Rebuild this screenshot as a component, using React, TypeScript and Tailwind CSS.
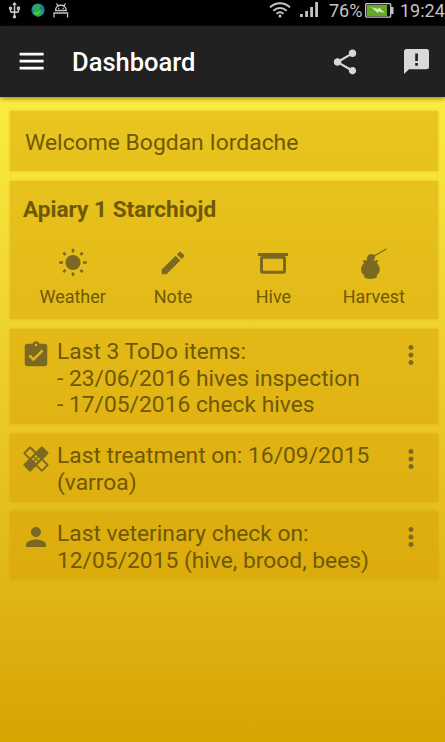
import type { ReactNode } from "react";
import {
  MdAssignmentTurnedIn,
  MdEdit,
  MdHealing,
  MdMoreVert,
  MdPerson,
  MdShare,
  MdUsb,
  MdWbSunny,
} from "react-icons/md";

function MenuIcon() {
  return (
    <svg className="-mt-[2px] ml-[19px] h-[18px] w-[25px]" viewBox="0 0 25 18" fill="currentColor">
      <path d="M.6 .7h24v2.700H.6zM.6 7.700h24v2.700H.6zM.6 14.700h24v2.700H.6z" />
    </svg>
  );
}

function FeedbackIcon() {
  return (
    <svg className="mr-[16px] ml-[44px] -mt-[1px] h-[25px] w-[25px] text-[#d8d8d8]" viewBox="0 0 25 25" fill="currentColor" fillRule="evenodd">
      <path d="M2.500 0h20A2.500 2.500 0 0 1 25 2.500v15.200a2.500 2.500 0 0 1-2.500 2.500H5L0 25V2.500A2.500 2.500 0 0 1 2.500 0zM11.200 4.500v7.600h2.700V4.500zM11.200 14v2.800h2.700V14z" />
    </svg>
  );
}

function HiveIcon() {
  return (
    <svg className="size-[30px]" viewBox="0 0 30 30" fill="none">
      <path d="M0 5h30v3H0z" fill="currentColor" />
      <rect x="3.500" y="9.300" width="23" height="15" rx="1.200" stroke="currentColor" strokeWidth="3" />
    </svg>
  );
}

function HoneyIcon() {
  return (
    <svg className="size-[30px] overflow-visible" viewBox="0 0 30 30" fill="currentColor">
      <path d="M27.200.2 27.800 1.200 15.500 8.600 14.700 7.400z" />
      <path d="M7.800 10.500c.2-2.800 2.500-4.700 5-4.400 3 .2 4.100 2.600 2.600 4.700l-1.200 2.200H7.800z" />
      <path d="M4.800 12c2 .8 11.500.8 13.600 0 .9.500.8 1.700-.2 2.200v1.500c3.700 3.200 3.400 8.800-.4 11.500v1.600c-.3 2.700-12.300 2.700-12.700 0v-1.600c-3.800-2.700-4.200-8.300-.4-11.500v-1.500c-.9-.6-.8-1.700.1-2.200z" />
    </svg>
  );
}

function StatusBar() {
  return (
    <div className="flex h-[26px] shrink-0 items-center bg-black text-[#c4c4c4]">
      <MdUsb className="ml-[5px] -mt-[6px] size-[19px]" />
      <svg className="-mt-[7px] ml-[7px] size-[14px]" viewBox="0 0 14 14">
        <circle cx="7" cy="7" r="6.600" fill="#1f7d9c" />
        <path d="M3 2 7 1l3 2-2 3 4 2-1 3-4 3-4-3 1-3-3-2z" fill="#26ac54" />
        <path d="m3 8 2 2 5-3-3 5-4-1z" fill="#55c936" />
      </svg>
      <svg className="-mt-[6px] ml-[8px] h-[15px] w-[16px]" viewBox="0 0 16 15" fill="none" stroke="currentColor" strokeWidth="1.300">
        <path d="M2.500 7.500c0-7 10.800-7 10.800 0zM3.400.5 5 2.800M12.500.5 11 2.800M1 14.500V10h13.600v4.500" />
        <path d="M5 5.300h1.300M9.600 5.300h1.300" />
      </svg>
      <svg className="-mt-[6px] ml-[200px] h-[16px] w-[22px]" viewBox="0 0 22 16" fill="none" stroke="currentColor" strokeWidth="1.900">
        <path d="M1 5.300c5.800-5.400 14.200-5.400 20 0M4.300 8.700c4-3.600 9.400-3.600 13.400 0M7.500 11.800c2.200-1.900 4.800-1.900 7 0" />
        <circle cx="11" cy="14" r="1.500" fill="currentColor" stroke="none" />
      </svg>
      <svg className="-mt-[8px] ml-[8px] h-[16px] w-[20px]" viewBox="0 0 20 16" fill="currentColor">
        <path d="M1 13h2.800v3H1zM6.200 10H9v6H6.200zM11.200 6H14v10h-2.800zM16.200 1H19v15h-2.800z" />
      </svg>
      <span className="-mt-[5px] ml-[10px] w-[33px] whitespace-nowrap text-[18px] leading-none">76%</span>
      <svg className="-mt-[6px] ml-[3px] h-[15px] w-[29px]" viewBox="0 0 29 15">
        <rect x=".7" y=".7" width="25" height="13.500" rx="1" fill="#111" stroke="#c4c4c4" strokeWidth="1.300" />
        <path d="M2 2h20v11H2z" fill="#62ab22" />
        <path d="M26 4h2.500v7H26z" fill="#c4c4c4" />
        <path d="m6 4 7 2 1-1.500 6 5.500-6-1.500-1.200 1.500z" fill="#d6e5c7" />
      </svg>
      <span className="-mt-[5px] ml-[6px] whitespace-nowrap text-[18px] leading-none">19:24</span>
    </div>
  );
}

function Card({ className, children }: { className: string; children: ReactNode }) {
  return (
    <section className={`bg-[#d7a000]/50 shadow-[0_0_3px_rgba(215,160,0,0.5)] ${className}`}>
      {children}
    </section>
  );
}

function Action({ icon, label }: { icon: ReactNode; label: string }) {
  return (
    <button className="flex flex-col items-center text-[18px] leading-[21px]">
      <span className="text-[#7a6823]">{icon}</span>
      <span className="mt-[8px]">{label}</span>
    </button>
  );
}

function InfoCard({ className, icon, lines }: { className: string; icon: ReactNode; lines: string[] }) {
  return (
    <Card className={`flex items-start pl-[11px] ${className}`}>
      <span className="mt-[1px] text-[#7a6823]">{icon}</span>
      <div className="ml-[6px] flex-1 whitespace-nowrap text-[22.800px] leading-[26.500px]">
        {lines.map((line) => (
          <p key={line}>{line}</p>
        ))}
      </div>
      <MdMoreVert className="mr-[12px] mt-[1px] size-[30px] text-[#7a6823]" />
    </Card>
  );
}

export default function App() {
  return (
    <div className="flex h-[742px] w-[445px] flex-col overflow-hidden font-[Roboto,sans-serif] text-[#6f5904]">
      <StatusBar />
      <header className="z-10 flex h-[71px] shrink-0 items-center bg-[#212121] text-white shadow-[0_1px_5px_rgba(60,50,0,0.65)]">
        <MenuIcon />
        <h1 className="ml-[28px] mt-[2px] flex-1 text-[25.500px] font-medium leading-none">Dashboard</h1>
        <MdShare className="size-[30px] text-[#d8d8d8]" />
        <FeedbackIcon />
      </header>
      <main className="flex flex-1 flex-col bg-linear-to-b from-[#fbed40] to-[#d8a400] px-[10px] pt-[14px] pr-[7px]">
        <Card className="flex h-[60px] items-center pl-[15px] text-[22.900px]">
          <p className="mt-[5px]">Welcome Bogdan Iordache</p>
        </Card>
        <Card className="mt-[10px] h-[138px] pt-[15px] pr-[14px] pl-[12.500px]">
          <h2 className="pl-[.5px] text-[22.600px] font-bold leading-[28px]">Apiary 1 Starchiojd</h2>
          <div className="mt-[24px] grid grid-cols-4">
            <Action icon={<MdWbSunny className="size-[30px]" />} label="Weather" />
            <Action icon={<MdEdit className="size-[30px]" />} label="Note" />
            <Action icon={<HiveIcon />} label="Hive" />
            <Action icon={<HoneyIcon />} label="Harvest" />
          </div>
        </Card>
        <InfoCard
          className="mt-[10px] h-[95px] pt-[10px]"
          icon={<MdAssignmentTurnedIn className="size-[30px]" />}
          lines={["Last 3 ToDo items:", "- 23/06/2016 hives inspection", "- 17/05/2016 check hives"]}
        />
        <InfoCard
          className="mt-[10px] h-[68px] pt-[9px]"
          icon={<MdHealing className="size-[30px]" />}
          lines={["Last treatment on: 16/09/2015", "(varroa)"]}
        />
        <InfoCard
          className="mt-[9px] h-[69px] pt-[10px]"
          icon={<MdPerson className="size-[30px]" />}
          lines={["Last veterinary check on:", "12/05/2015 (hive, brood, bees)"]}
        />
      </main>
    </div>
  );
}
